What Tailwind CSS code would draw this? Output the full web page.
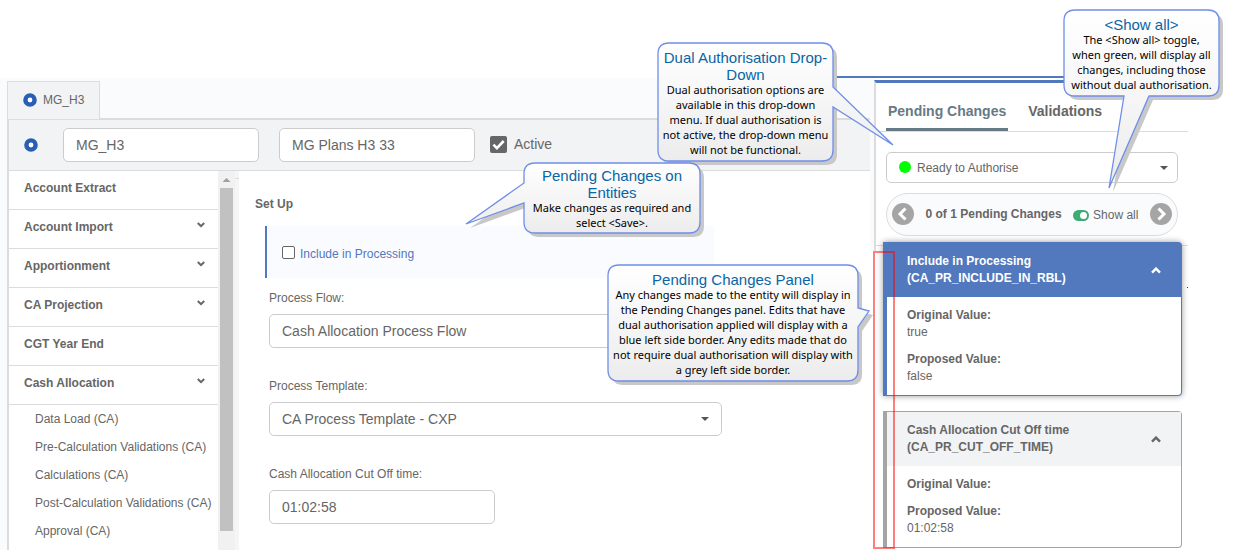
<!DOCTYPE html>
<html lang="en">
<head>
<meta charset="utf-8">
<meta name="viewport" content="width=device-width, initial-scale=1">
<title>MG_H3</title>
<script src="https://cdn.jsdelivr.net/npm/@tailwindcss/browser@4"></script>
</head>
<body class="bg-white">
<div class="relative pt-[78px] font-['Liberation_Sans',Arial,sans-serif] text-xs text-[#666]">

  <div class="flex items-start">
    <!-- Entity editor -->
    <section class="flex-1 min-w-0 bg-[#fafbfd] pl-[7px] pt-[3px]">
      <div class="flex">
        <button class="flex items-center gap-[6px] h-[38px] w-[93px] pl-[15px] pr-3 pb-[2px] bg-[#f2f3f5] border border-b-0 border-[#dcdcdc]">
          <svg class="size-[14px] shrink-0" viewBox="0 0 14 14"><circle cx="7" cy="7" r="4.600" fill="#fff" stroke="#2a5db4" stroke-width="4.400"/></svg>MG_H3</button>
        <div class="flex-1 border-b-2 border-[#dcdcdc] mb-[-1px]"></div>
      </div>
      <div class="flex items-center h-[52px] border-l-2 border-t border-b border-[#dcdcdc] bg-[#f2f3f5] pl-[15px]">
        <svg class="size-[14px] shrink-0" viewBox="0 0 14 14"><circle cx="7" cy="7" r="4.600" fill="#fff" stroke="#2a5db4" stroke-width="4.400"/></svg>
        <input aria-label="Code" value="MG_H3" class="ml-[25px] w-[196px] h-[34px] px-3 text-sm bg-white border border-[#ccc] rounded-[5px]">
        <input aria-label="Name" value="MG Plans H3 33" class="ml-5 w-[196px] h-[34px] px-3 text-sm bg-white border border-[#ccc] rounded-[5px]">
        <label class="ml-[15px] flex items-center gap-[7px] pb-[2px] text-sm">
          <span class="relative size-[17px]">
            <input type="checkbox" checked class="block appearance-none size-[17px] rounded-[2px] bg-[#666]">
            <svg class="absolute inset-0 pointer-events-none" viewBox="0 0 17 17" fill="none" stroke="#fff" stroke-width="2.600"><path d="M3.400 8.600l3.500 3.500 6.800-7.100"/></svg>
          </span>Active</label>
      </div>
      <div class="flex h-[379px]">
        <nav class="w-[211px] bg-white border-l-2 border-[#dcdcdc]">
          <button class="flex items-center justify-between w-full h-[39px] pl-[15px] pr-[13px] pb-1 border-b border-[#dcdcdc] font-bold">Account Extract</button>
          <button class="flex items-center justify-between w-full h-[39px] pl-[15px] pr-[13px] pb-1 border-b border-[#dcdcdc] font-bold">Account Import<svg class="w-2 h-[6px] mb-1" viewBox="0 0 8 6" fill="none" stroke="#666" stroke-width="2"><path d="M.8 1l3.200 3.200L7.200 1"/></svg></button>
          <button class="flex items-center justify-between w-full h-[39px] pl-[15px] pr-[13px] pb-1 border-b border-[#dcdcdc] font-bold">Apportionment<svg class="w-2 h-[6px] mb-1" viewBox="0 0 8 6" fill="none" stroke="#666" stroke-width="2"><path d="M.8 1l3.200 3.200L7.200 1"/></svg></button>
          <button class="flex items-center justify-between w-full h-[39px] pl-[15px] pr-[13px] pb-1 border-b border-[#dcdcdc] font-bold">CA Projection<svg class="w-2 h-[6px] mb-1" viewBox="0 0 8 6" fill="none" stroke="#666" stroke-width="2"><path d="M.8 1l3.200 3.200L7.200 1"/></svg></button>
          <button class="flex items-center justify-between w-full h-[39px] pl-[15px] pr-[13px] pb-1 border-b border-[#dcdcdc] font-bold">CGT Year End</button>
          <button class="flex items-center justify-between w-full h-[39px] pl-[15px] pr-[13px] pb-1 border-b border-[#dcdcdc] font-bold">Cash Allocation<svg class="w-2 h-[6px] mb-1" viewBox="0 0 8 6" fill="none" stroke="#666" stroke-width="2"><path d="M.8 1l3.200 3.200L7.200 1"/></svg></button>
          <div class="flex flex-col pl-[26px] whitespace-nowrap leading-7">
            <a href="#">Data Load (CA)</a>
            <a href="#">Pre-Calculation Validations (CA)</a>
            <a href="#">Calculations (CA)</a>
            <a href="#">Post-Calculation Validations (CA)</a>
            <a href="#">Approval (CA)</a>
          </div>
        </nav>
        <div class="w-[17px] bg-[#f1f1f1] flex flex-col items-center">
          <svg class="w-[17px] h-[17px] shrink-0" viewBox="0 0 17 17"><path d="M4.500 11h8l-4-4z" fill="#a0a0a0"/></svg>
          <div class="w-[13px] h-[343px] bg-[#c1c1c1]"></div>
        </div>
        <div class="w-1 bg-[#f4f5f7] pt-[7px]"><div class="h-px bg-[#dcdcdc]"></div></div>
        <form class="flex-1 min-w-0 bg-white pl-4 pt-6">
          <h2 class="font-bold leading-[18px]">Set Up</h2>
          <div class="ml-[10px] mt-[13px] h-[52px] max-w-[449px] pl-[15px] flex items-center gap-[5px] bg-[#fafbff] border-l-2 border-[#5278bd] text-[#5278bd]">
            <input id="inc" type="checkbox" class="appearance-none size-[13px] border border-[#666] rounded-[2px] bg-white">
            <label for="inc" class="pt-[3px]">Include in Processing</label>
          </div>
          <div class="ml-[14px] pt-[10px] flex flex-col">
            <label for="flow" class="h-[26px] leading-[20px]">Process Flow:</label>
            <div class="relative max-w-[453px]">
              <select id="flow" class="block appearance-none w-full h-[34px] px-3 text-sm bg-white border border-[#ccc] rounded-[5px]"><option>Cash Allocation Process Flow</option></select>
              <svg class="absolute right-[13px] top-[15px] w-2 h-1 pointer-events-none" viewBox="0 0 8 4"><path d="M0 0h8L4 4z" fill="#555"/></svg>
            </div>
            <label for="tmpl" class="mt-7 h-[26px] leading-[20px]">Process Template:</label>
            <div class="relative max-w-[453px]">
              <select id="tmpl" class="block appearance-none w-full h-[34px] px-3 text-sm bg-white border border-[#ccc] rounded-[5px]"><option>CA Process Template - CXP</option></select>
              <svg class="absolute right-[13px] top-[15px] w-2 h-1 pointer-events-none" viewBox="0 0 8 4"><path d="M0 0h8L4 4z" fill="#555"/></svg>
            </div>
            <label for="cut" class="mt-7 h-[26px] leading-[20px]">Cash Allocation Cut Off time:</label>
            <input id="cut" value="01:02:58" class="w-[226px] h-[34px] px-3 text-sm bg-white border border-[#ccc] rounded-[5px]">
          </div>
        </form>
      </div>
    </section>

    <div class="w-1 h-[173px] bg-[#fafbfd]"></div>

    <!-- Pending changes panel -->
    <aside class="relative w-[314px] mr-[45px] mt-[2px]">
      <div class="absolute -top-1 right-0 w-[356px] h-[2px] bg-[#5278bd]"></div>
      <div class="absolute right-0 top-[207px] size-px bg-[#333]"></div>
      <div class="h-[171px] border-t-[3px] border-t-[#5278bd] border-l-2 border-l-[#dcdcdc]">
        <div role="tablist" class="ml-[2px] pl-2 pt-3 flex gap-[18px] h-[49px] border-b border-[#dcdcdc] font-bold text-sm leading-8">
          <button role="tab" class="h-9 px-[2px] pb-1 border-b-[3px] border-[#667a85] text-[#667a85] whitespace-nowrap">Pending Changes</button>
          <button role="tab" class="h-9 px-[2px] pb-1">Validations</button>
        </div>
        <div class="relative ml-[10px] mr-[10px] mt-5">
          <select aria-label="Authorisation status" class="block appearance-none w-full h-[31px] pl-[30px] bg-white border border-[#ccc] rounded-[5px]"><option>Ready to Authorise</option></select>
          <span class="absolute left-[13px] top-[9px] size-3 rounded-full bg-[#0f0]"></span>
          <svg class="absolute right-[10px] top-[14px] w-2 h-1 pointer-events-none" viewBox="0 0 8 4"><path d="M0 0h8L4 4z" fill="#555"/></svg>
        </div>
        <div class="mx-[10px] mt-[10px] h-[43px] px-[5px] pb-[2px] flex items-center justify-between rounded-full border border-[#dcdcdc] bg-[#fafbfd]">
          <button aria-label="Previous"><svg class="block size-[22px]" viewBox="0 0 22 22"><circle cx="11" cy="11" r="11" fill="#a5a5a5"/><path d="M13.500 5.500L8 11l5.500 5.500" fill="none" stroke="#fff" stroke-width="3"/></svg></button>
          <span class="font-bold">0 of 1 Pending Changes</span>
          <label class="flex items-center gap-1 pt-[3px]"><span class="relative w-4 h-[11px]"><input type="checkbox" role="switch" checked class="block appearance-none w-4 h-[11px] rounded-full bg-[#3dab73]"><span class="absolute right-[2px] top-[2px] size-[7px] rounded-full bg-white pointer-events-none"></span></span>Show all</label>
          <button aria-label="Next"><svg class="block size-[22px]" viewBox="0 0 22 22"><circle cx="11" cy="11" r="11" fill="#a5a5a5"/><path d="M8.500 5.500L14 11l-5.500 5.500" fill="none" stroke="#fff" stroke-width="3"/></svg></button>
        </div>
        <div class="mt-[9px] h-px bg-[#dcdcdc]"></div>
      </div>
      <div class="relative ml-[9px] mr-[6px] -mt-[9px] flex flex-col gap-[15px] leading-[17px]">
        <article class="border border-l-4 border-[#5278bd] rounded-r-[4px] bg-white shadow-[0_0_6px_rgba(0,0,0,0.4)]">
          <header class="flex items-center justify-between bg-[#5278bd] text-white font-bold h-[54px] pl-5 pr-5">
            <h3>Include in Processing<br>(CA_PR_INCLUDE_IN_RBL)</h3>
            <button aria-label="Collapse"><svg class="block w-[10px] h-[7px]" viewBox="0 0 10 7" fill="none" stroke="#fff" stroke-width="2.400"><path d="M1 5.600l4-4 4 4"/></svg></button>
          </header>
          <dl class="pl-5 pt-[10px] pb-[10px]"><dt class="font-bold">Original Value:</dt><dd>true</dd><dt class="font-bold mt-[10px]">Proposed Value:</dt><dd>false</dd></dl>
        </article>
        <article class="border border-l-4 border-[#a5a5a5] rounded-r-[4px] bg-white">
          <header class="flex items-center justify-between bg-[#f2f3f5] font-bold h-[54px] pl-5 pr-5">
            <h3>Cash Allocation Cut Off time<br>(CA_PR_CUT_OFF_TIME)</h3>
            <button aria-label="Collapse"><svg class="block w-[10px] h-[7px]" viewBox="0 0 10 7" fill="none" stroke="#666" stroke-width="2.400"><path d="M1 5.600l4-4 4 4"/></svg></button>
          </header>
          <dl class="pl-5 pt-[10px] pb-[10px]"><dt class="font-bold">Original Value:</dt><dt class="font-bold mt-[10px]">Proposed Value:</dt><dd>01:02:58</dd></dl>
        </article>
      </div>
      <div class="absolute left-[-1px] top-[171px] w-[22px] h-[298px] border-2 border-[#ff0000]/50"></div>
    </aside>
  </div>

  <!-- Callouts -->
  <svg class="absolute size-0"><defs>
    <linearGradient id="g" x1="0" y1="0" x2="0" y2="1"><stop offset="0" stop-color="#fff"/><stop offset="1" stop-color="#ececec"/></linearGradient></defs></svg>

  <div class="absolute right-[399px] top-[42px] w-[177px] h-[120px] pt-[7px] text-center text-black whitespace-nowrap">
    <svg class="absolute left-0 top-0 w-[177px] h-[120px] overflow-visible" viewBox="0 0 177 120"><path transform="translate(4 4)" fill="#c8c8c8" d="M12 1H165Q176 1 176 12V108Q176 119 165 119H12Q1 119 1 108V12Q1 1 12 1Z"/><path fill="url(#g)" stroke="#6f8fe8" stroke-width="1.300" d="M12 1H165Q176 1 176 12V45L236 103L176 65V108Q176 119 165 119H12Q1 119 1 108V12Q1 1 12 1Z"/></svg>
    <div class="relative flex flex-col items-center"><h4 class="text-[15px] leading-[17px] text-[#0a65a5]">Dual Authorisation Drop-<br>Down</h4>
    <p class="-mt-px font-['Noto_Sans',sans-serif] text-[11px] leading-[15px]">Dual authorisation options are<br>available in this drop-down<br>menu. If dual authorisation is<br>not active, the drop-down menu<br>will not be functional.</p></div>
  </div>

  <div class="absolute left-[523px] top-[162px] w-[178px] h-[72px] pt-[5px] text-center text-black whitespace-nowrap">
    <svg class="absolute left-0 top-0 w-[178px] h-[72px] overflow-visible" viewBox="0 0 178 72"><path transform="translate(4 4)" fill="#c8c8c8" d="M12 1H166Q177 1 177 12V60Q177 71 166 71H12Q1 71 1 60V41L-57 62L1 21V12Q1 1 12 1Z"/><path fill="url(#g)" stroke="#6f8fe8" stroke-width="1.300" d="M12 1H166Q177 1 177 12V60Q177 71 166 71H12Q1 71 1 60V41L-57 62L1 21V12Q1 1 12 1Z"/></svg>
    <div class="relative flex flex-col items-center"><h4 class="text-[15px] leading-[17px] text-[#0a65a5]">Pending Changes on<br>Entities</h4>
    <p class="-mt-px font-['Noto_Sans',sans-serif] text-[11px] leading-[15px]">Make changes as required and<br>select &lt;Save&gt;.</p></div>
  </div>

  <div class="absolute right-[374px] top-[264px] w-[252px] h-[118px] pt-[7px] text-center text-black whitespace-nowrap">
    <svg class="absolute left-0 top-0 w-[252px] h-[118px] overflow-visible" viewBox="0 0 252 118"><path transform="translate(4 4)" fill="#c8c8c8" d="M12 1H240Q251 1 251 12V44L262 47L251 63V106Q251 117 240 117H12Q1 117 1 106V12Q1 1 12 1Z"/><path fill="url(#g)" stroke="#6f8fe8" stroke-width="1.300" d="M12 1H240Q251 1 251 12V44L262 47L251 63V106Q251 117 240 117H12Q1 117 1 106V12Q1 1 12 1Z"/></svg>
    <div class="relative flex flex-col items-center"><h4 class="text-[15px] leading-[17px] text-[#0a65a5]">Pending Changes Panel</h4>
    <p class="-mt-px font-['Noto_Sans',sans-serif] text-[11px] leading-[15px]">Any changes made to the entity will display in<br>the Pending Changes panel. Edits that have<br>dual authorisation applied will display with a<br>blue left side border. Any edits made that do<br>not require dual authorisation will display with<br>a grey left side border.</p></div>
  </div>

  <div class="absolute right-[13px] top-[9px] w-[157px] h-[89px] pt-[7px] text-center text-black whitespace-nowrap">
    <svg class="absolute left-0 top-0 w-[157px] h-[89px] overflow-visible" viewBox="0 0 157 89"><path transform="translate(4 4)" fill="#c8c8c8" d="M12 1H145Q156 1 156 12V76Q156 87 145 87H86L46 179L61 87H12Q1 87 1 76V12Q1 1 12 1Z"/><path fill="url(#g)" stroke="#6f8fe8" stroke-width="1.300" d="M12 1H145Q156 1 156 12V76Q156 87 145 87H86L46 179L61 87H12Q1 87 1 76V12Q1 1 12 1Z"/></svg>
    <div class="relative flex flex-col items-center"><h4 class="text-[15px] leading-[17px] text-[#0a65a5]">&lt;Show all&gt;</h4>
    <p class="-mt-px font-['Noto_Sans',sans-serif] text-[11px] leading-[15px]">The &lt;Show all&gt; toggle,<br>when green, will display all<br>changes, including those<br>without dual authorisation.</p></div>
  </div>
</div>
</body>
</html>
